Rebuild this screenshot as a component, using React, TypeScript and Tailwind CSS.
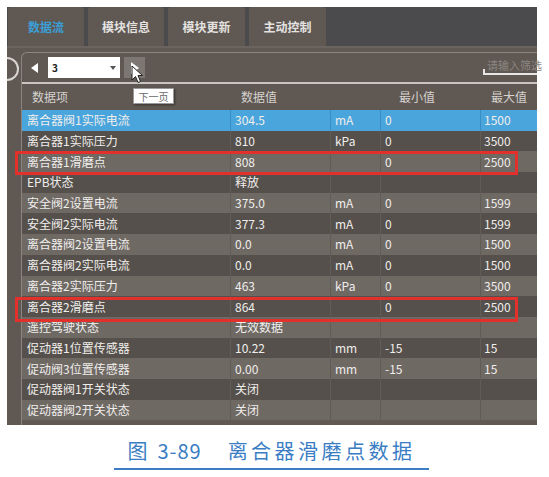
import React from "react";

const rows: [string, string, string, string, string][] = [
  ["离合器阀1实际电流", "304.5", "mA", "0", "1500"],
  ["离合器1实际压力", "810", "kPa", "0", "3500"],
  ["离合器1滑磨点", "808", "", "0", "2500"],
  ["EPB状态", "释放", "", "", ""],
  ["安全阀2设置电流", "375.0", "mA", "0", "1599"],
  ["安全阀2实际电流", "377.3", "mA", "0", "1599"],
  ["离合器阀2设置电流", "0.0", "mA", "0", "1500"],
  ["离合器阀2实际电流", "0.0", "mA", "0", "1500"],
  ["离合器2实际压力", "463", "kPa", "0", "3500"],
  ["离合器2滑磨点", "864", "", "0", "2500"],
  ["遥控驾驶状态", "无效数据", "", "", ""],
  ["促动器1位置传感器", "10.22", "mm", "-15", "15"],
  ["促动阀3位置传感器", "0.00", "mm", "-15", "15"],
  ["促动器阀1开关状态", "关闭", "", "", ""],
  ["促动器阀2开关状态", "关闭", "", "", ""],
];

const font = { fontFamily: '"Noto Sans CJK SC", "Noto Sans", sans-serif' };

export default function App() {
  return (
    <div className="w-[549px] h-[477px] bg-white relative overflow-hidden" style={font}>
      <div className="ml-[7px] pt-[7px] w-[530px]">
        {/* tabs */}
        <div className="h-[39px] bg-[#4b4b4d] flex gap-[4px] pl-[1px] text-[12px] font-semibold">
          <div className="w-[76px] rounded-t-[3px] bg-[#5f5853] flex items-center justify-center text-[#3b9fd6]">数据流</div>
          <div className="w-[76px] rounded-t-[3px] bg-[#5f5853] flex items-center justify-center text-[#e4e2e0]">模块信息</div>
          <div className="w-[77px] rounded-t-[3px] bg-[#5f5853] flex items-center justify-center text-[#e4e2e0]">模块更新</div>
          <div className="w-[77px] rounded-t-[3px] bg-[#5f5853] flex items-center justify-center text-[#e4e2e0]">主动控制</div>
        </div>
        {/* content */}
        <div className="h-[379px] bg-[#5f5853] flex border-t-[2px] border-[#6a635e]">
          <div className="w-[14px] pt-[8px]">
            <svg width="14" height="26" viewBox="0 0 14 26">
              <path d="M0 2 A11 11 0 0 1 0 24" fill="none" stroke="#d8d4d0" strokeWidth="2" />
            </svg>
          </div>
          <div className="flex-1 mt-[4px] border-l border-t border-[#8b847f] rounded-tl-[6px] flex flex-col">
            {/* toolbar */}
            <div className="h-[29px] flex items-start pt-[4px] relative">
              <div className="w-[26px] h-[21px] flex items-center justify-center">
                <svg width="8" height="10" viewBox="0 0 8 10"><path d="M7 0 L0 5 L7 10 Z" fill="#ffffff" /></svg>
              </div>
              <div className="w-[72px] h-[21px] bg-white flex items-center justify-between px-[4px]">
                <span className="text-[10px] font-bold text-[#222]">3</span>
                <svg width="6" height="4" viewBox="0 0 6 4"><path d="M0 0 L6 0 L3 4 Z" fill="#555" /></svg>
              </div>
              <div className="ml-[4px] w-[21px] h-[21px] bg-[#7d7773] flex items-center justify-center">
                <svg width="8" height="12" viewBox="0 0 8 12"><path d="M0 0 L8 6 L0 12 Z" fill="#ffffff" /></svg>
              </div>
              <div className="ml-auto w-[54px] h-[19px] relative">
                <span className="absolute left-[4px] top-[1px] text-[11px] leading-[14px] text-[#8c8782] whitespace-nowrap">请输入筛选</span>
                <div className="absolute left-0 bottom-[1px] w-full h-[2px] bg-[#e8e6e4]" />
                <div className="absolute left-0 bottom-[1px] w-[2px] h-[6px] bg-[#e8e6e4]" />
              </div>
            </div>
            <div className="h-[2px] bg-[#c8c4c0]" />
            {/* header */}
            <div className="h-[26px] flex items-center text-[12px] text-[#d6d2ce]">
              <div className="w-[209px] pl-[10px]">数据项</div>
              <div className="w-[100px] pl-[10px]">数据值</div>
              <div className="w-[50px]" />
              <div className="w-[100px] pl-[18px]">最小值</div>
              <div className="flex-1 pl-[10px]">最大值</div>
            </div>
            {/* rows */}
            <div className="flex flex-col">
              {rows.map((r, i) => {
                const sel = i === 0;
                const bg = sel ? "bg-[#4aa5dd]" : i % 2 === 1 ? "bg-[#55504b]" : "bg-[#6f6964]";
                const sep = sel ? "border-[#3a8dc2]" : "border-[#625c57]";
                return (
                  <div key={i} className={`h-[20.7px] flex items-center text-[12px] text-[#f0eeec] ${bg}`}>
                    <div className={`w-[209px] h-full flex items-center pl-[5px] border-r ${sep}`}>{r[0]}</div>
                    <div className={`w-[100px] h-full flex items-center pl-[4px] border-r ${sep}`}>{r[1]}</div>
                    <div className={`w-[50px] h-full flex items-center pl-[4px] border-r ${sep}`}>{r[2]}</div>
                    <div className={`w-[100px] h-full flex items-center pl-[4px] border-r ${sep}`}>{r[3]}</div>
                    <div className="flex-1 h-full flex items-center pl-[3px]">{r[4]}</div>
                  </div>
                );
              })}
            </div>
          </div>
        </div>
      </div>

      {/* red highlight boxes */}
      <div className="absolute left-[15px] top-[151px] w-[503px] h-[24px] border-[3px] border-[#e2302c]" />
      <div className="absolute left-[15px] top-[297px] w-[503px] h-[25px] border-[3px] border-[#e2302c]" />

      {/* tooltip */}
      <div className="absolute left-[133px] top-[88px] w-[41px] h-[16px] bg-white border border-[#9a9a9a] shadow-[1px_1px_2px_rgba(0,0,0,0.4)] flex items-center justify-center text-[10px] text-[#666]">下一页</div>

      {/* cursor */}
      <svg className="absolute left-[131px] top-[65px]" width="14" height="19" viewBox="0 0 14 19">
        <path d="M1 1 L1 15 L4.5 11.5 L7 17.5 L9.5 16.5 L7 10.5 L11.5 10.5 Z" fill="#ffffff" stroke="#222" strokeWidth="1" strokeLinejoin="round" />
      </svg>

      {/* caption */}
      <div className="absolute left-[114px] top-[437px] w-[315px] flex flex-col items-center">
        <div className="text-[20px] leading-[28px] text-[#3a7dc4] whitespace-nowrap">
          <span>图</span>
          <span className="inline-block w-[10px]" />
          <span className="tracking-[1px]">3-89</span>
          <span className="inline-block w-[26px]" />
          <span className="tracking-[3.5px]">离合器滑磨点数据</span>
        </div>
        <div className="w-full h-[2px] bg-[#3a7dc4] mt-[3px]" />
      </div>
    </div>
  );
}
